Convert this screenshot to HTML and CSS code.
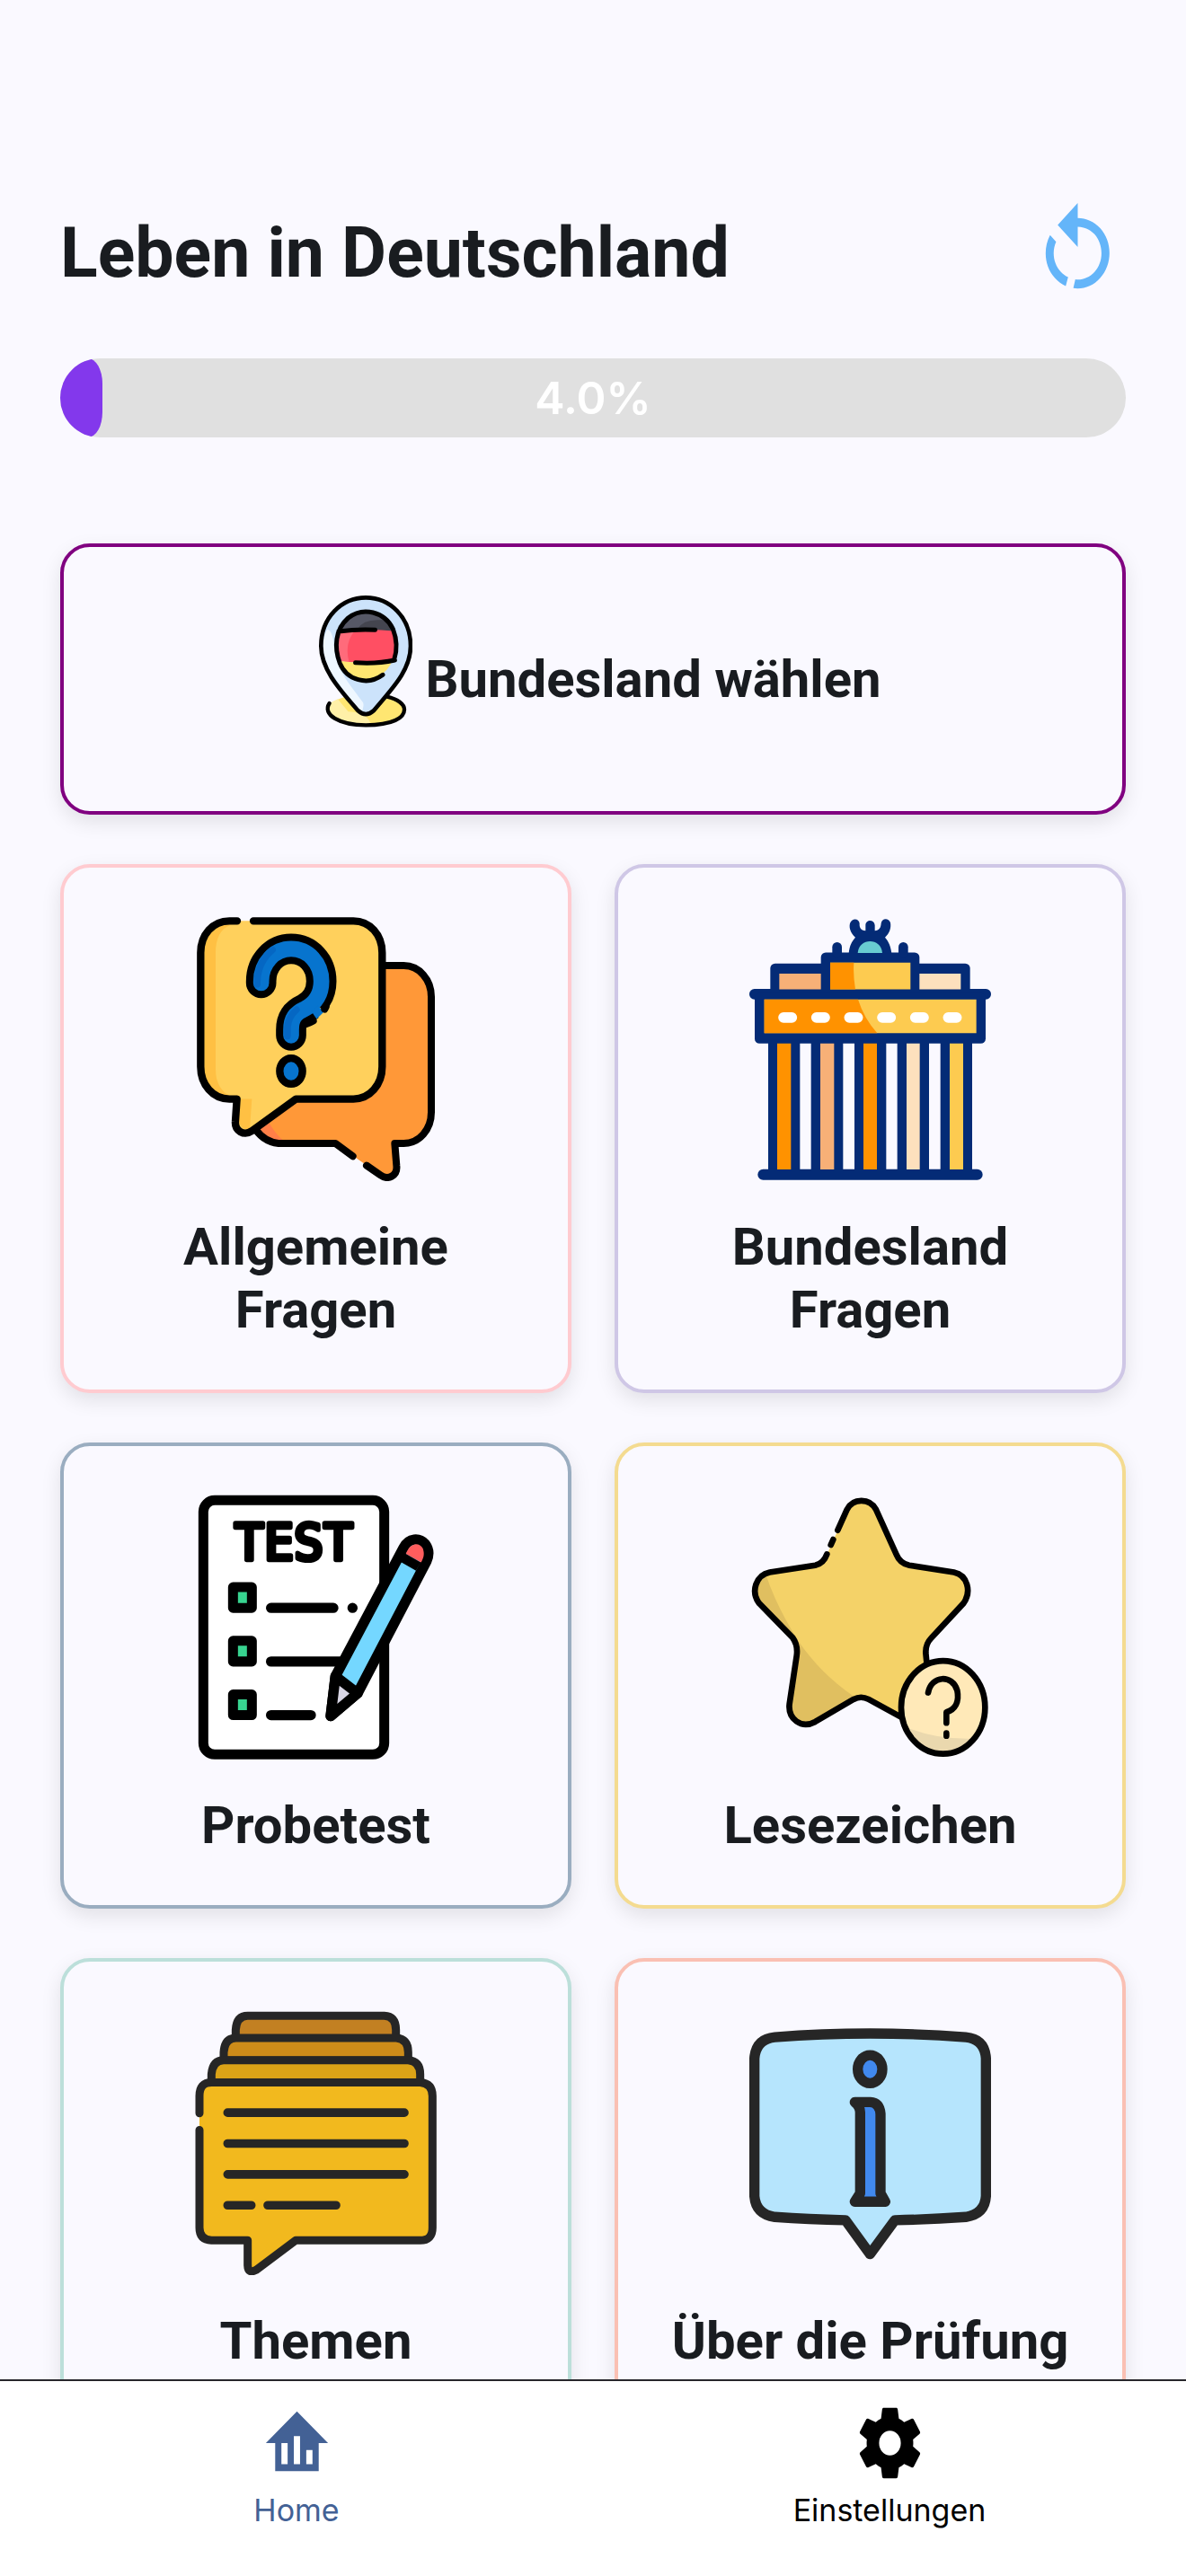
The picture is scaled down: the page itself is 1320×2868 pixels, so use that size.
FILE: index.html
```html
<!DOCTYPE html>
<html lang="de">
<head>
    <meta charset="utf-8">
    <meta name="viewport" content="width=device-width, initial-scale=1">
    <title>Leben in Deutschland</title>
    <link rel="stylesheet" href="styles.css">
</head>
<body>
    <main class="content">
        <header class="header">
            <h1>Leben in Deutschland</h1>
            <button type="button" class="restart" aria-label="Neu starten">
                <svg viewBox="0 0 24 24" preserveAspectRatio="none"><path d="M12,4C14.1,4 16.1,4.8 17.6,6.3C20.7,9.4 20.7,14.5 17.6,17.6C15.8,19.5 13.3,20.2 10.9,19.9L11.4,17.9C13.1,18.1 14.9,17.5 16.2,16.2C18.5,13.9 18.5,10.1 16.2,7.7C15.1,6.6 13.5,6 12,6V10.6L7,5.6L12,0.6V4M6.3,17.6C3.7,15 3.3,11 5.1,7.9L6.6,9.4C5.5,11.6 5.9,14.4 7.8,16.2C8.3,16.7 8.9,17.1 9.6,17.4L9,19.4C8,19 7.1,18.4 6.3,17.6Z"/></svg>
            </button>
        </header>

        <div class="progress" role="progressbar" aria-label="Fortschritt" aria-valuemin="0" aria-valuemax="100" aria-valuenow="4">
            <div class="progress_fill" style="width: 4%"></div>
            <span class="progress_text">4.0%</span>
        </div>

        <a href="#bundesland" class="card select">
            <svg class="pin" viewBox="42 42 313 441" preserveAspectRatio="none" aria-hidden="true">
                <ellipse cx="199" cy="423" rx="128" ry="50" fill="#ffe671"/>
                <path d="M77 402C60 440 120 475 215 472C210 445 175 430 140 430Q115 400 105 388Z" fill="#fff0a8"/>
                <path d="M77 402C52 440 110 475 199 475C290 475 328 450 328 423C328 405 305 388 270 380" fill="none" stroke="#000" stroke-width="13" stroke-linecap="round"/>
                <path d="M199 49C118 49 49 115 49 211C49 295 125 370 173 427Q199 450 225 427C280 360 349 295 349 211C349 115 280 49 199 49Z" fill="#cce3fb"/>
                <path d="M70 155C85 158 92 190 92 212C95 285 150 345 190 400Q194 415 184 432Q172 432 160 410L80 295C50 240 50 190 70 155Z" fill="#eef7ff"/>
                <clipPath id="flag"><ellipse cx="199" cy="210" rx="99" ry="114"/></clipPath>
                <g clip-path="url(#flag)">
                    <path d="M90 90H310V165Q200 150 90 162Z" fill="#565866"/>
                    <path d="M170 155Q190 122 245 124L310 120V170Z" fill="#44454f"/>
                    <path d="M90 162Q200 150 310 162V258Q200 274 90 258Z" fill="#ff4f63"/>
                    <path d="M90 162Q130 156 165 156Q125 200 143 264Q110 262 90 258Z" fill="#ff6b7b"/>
                    <path d="M90 258Q200 274 310 258V330H90Z" fill="#ffe671"/>
                </g>
                <path d="M256 307C205 345 135 325 112 268C92 215 96 155 140 117C190 78 262 96 290 154Q310 206 294 256M108 162Q170 154 230 157M164 266Q235 271 296 258" fill="none" stroke="#000" stroke-width="15" stroke-linecap="round"/>
                <path d="M199 49C118 49 49 115 49 211C49 295 125 370 173 427Q199 450 225 427C280 360 349 295 349 211C349 115 280 49 199 49Z" fill="none" stroke="#000" stroke-width="14"/>
            </svg>
            <span class="card_text">Bundesland wählen</span>
        </a>

        <div class="cards">
            <a href="#allgemein" class="card card_pink">
                <svg class="icon" viewBox="51 58 807 884" preserveAspectRatio="none" aria-hidden="true">
                    <path d="M676 223H748C800 223 840 270 840 327V712C840 770 800 816 748 816H718L724 890C728 925 695 940 670 922L520 816H330C270 816 240 770 230 740L600 600Z" fill="#ff9838"/>
                    <path d="M260 770L297 745Q320 785 345 806Q295 810 260 770Z" fill="#ff7f48"/>
                    <path d="M676 223H748C800 223 840 270 840 327V712C840 770 800 816 748 816H718L724 890C728 925 695 940 670 922L624 890M578 859L520 816H330Q285 812 255 772" fill="none" stroke="#000" stroke-width="24" stroke-linecap="round" stroke-linejoin="round"/>
                    <path d="M166 74H580C635 74 676 120 676 180V560C676 620 635 668 580 668H388L240 775C215 792 183 775 186 742L191 668H166C110 668 70 620 70 560V180C70 120 110 74 166 74Z" fill="#ffd05c"/>
                    <path d="M180 86C140 90 120 130 120 178V570C120 620 145 650 172 659C115 662 82 620 82 562V180C82 130 115 86 166 86Z" fill="#ffc043"/>
                    <path d="M202 668H241L234 768Q205 775 198 742Z" fill="#ffc043"/>
                    <path d="M246 74H580C635 74 676 120 676 180V560C676 620 635 668 580 668H388L240 775C215 792 183 775 186 742L191 668H166C110 668 70 620 70 560V180C70 120 110 74 166 74H192" fill="none" stroke="#000" stroke-width="25" stroke-linecap="round" stroke-linejoin="round"/>
                    <path d="M272 281V275C272 215 316 167 372 167C430 167 473 215 473 275C473 320 450 350 418 367C385 382 372 400 372 437V456" fill="none" stroke="#000" stroke-width="101" stroke-linecap="round"/>
                    <path d="M272 281V275C272 215 316 167 372 167C430 167 473 215 473 275C473 320 450 350 418 367C385 382 372 400 372 437V456" fill="none" stroke="#0774ce" stroke-width="53" stroke-linecap="round"/>
                    <path d="M259 285V275Q262 210 310 170M360 458V430Q362 395 390 370" fill="none" stroke="#0567c3" stroke-width="22" stroke-linecap="round"/>
                    <path d="M447 379L475 408L492 386L468 362Z" fill="#ffd05c"/>
                    <path d="M440 376L457 401L481 378L462 357Z" fill="#0774ce"/>
                    <path d="M484 368L488 361M446 407Q432 415 424 417" fill="none" stroke="#000" stroke-width="24" stroke-linecap="round"/>
                    <ellipse cx="372" cy="575" rx="38" ry="43" fill="#0774ce" stroke="#000" stroke-width="25"/>
                </svg>
                <span class="card_text">Allgemeine Fragen</span>
            </a>

            <a href="#land" class="card card_lilac">
                <svg class="icon" viewBox="42 58 807 884" preserveAspectRatio="none" aria-hidden="true">
                    <g fill="#042b76">
                        <rect x="112" y="216" width="667" height="110" rx="16"/>
                        <rect x="281" y="179" width="329" height="130" rx="16"/>
                        <path d="M374 182C377 155 384 143 396 129C377 112 374 92 379 80C386 62 409 66 410 82C409 96 414 105 430 107V88C431 68 459 68 461 88V107C476 105 481 97 482 82C484 64 507 62 513 80C516 98 510 115 495 129C507 143 514 158 517 182Z"/>
                        <rect x="319" y="145" width="32" height="50" rx="16"/>
                        <rect x="540" y="145" width="32" height="50" rx="16"/>
                        <rect x="42" y="301" width="807" height="35" rx="17"/>
                        <rect x="60" y="315" width="771" height="168" rx="16"/>
                        <path d="M105 470H211V915H105ZM248 470H355V915H248ZM393 470H499V915H393ZM536 470H642V915H536ZM680 470H786V915H680Z"/>
                        <rect x="70" y="902" width="751" height="36" rx="18"/>
                    </g>
                    <path d="M404 181C408 129 482 129 486 181Z" fill="#68ccd1"/>
                    <path d="M142 250H281V302H142ZM279 483H325V903H279Z" fill="#f7b077"/>
                    <path d="M610 250H748V302H610ZM567 483H611V903H567Z" fill="#fde0bd"/>
                    <path d="M312 213H580V302H312ZM92 336H800V448H92ZM711 483H756V903H711Z" fill="#fdcb50"/>
                    <path d="M312 213H391Q388 255 396 302H312ZM92 336H405Q425 400 469 448H92ZM135 483H181V903H135ZM423 483H468V903H423Z" fill="#ff9200"/>
                    <path d="M156 396H184M266 396H294M376 396H404M486 396H514M596 396H624M706 396H734" stroke="#fff" stroke-width="35" stroke-linecap="round"/>
                </svg>
                <span class="card_text">Bundesland Fragen</span>
            </a>

            <a href="#probetest" class="card card_blue">
                <svg class="icon" viewBox="51 72 807 884" preserveAspectRatio="none" aria-hidden="true">
                    <rect x="79" y="91" width="604" height="848" rx="38" fill="#fff" stroke="#000" stroke-width="33"/>
                    <text class="icon_text" x="381" y="287">TEST</text>
                    <g fill="#38d490" stroke="#000" stroke-width="33" stroke-linejoin="round">
                        <rect x="178" y="381" width="63" height="69"/>
                        <rect x="178" y="560" width="63" height="69"/>
                        <rect x="178" y="739" width="63" height="69"/>
                    </g>
                    <path d="M305 450H513M577 450H577.1M305 629H540M305 808H438" fill="none" stroke="#000" stroke-width="34" stroke-linecap="round"/>
                    <path d="M504 811L520 678L747 250C765 215 800 215 820 237C833 255 833 275 824 295L594 735Z" fill="#74d7ff" stroke="#000" stroke-width="34" stroke-linejoin="round"/>
                    <path d="M755 270C770 230 800 230 812 252C818 270 815 282 806 298Z" fill="#ff5d5d"/>
                    <path d="M746 283L797 312" stroke="#000" stroke-width="32"/>
                    <path d="M504 811L520 678L594 735Z" fill="#d9d6e5" stroke="#000" stroke-width="34" stroke-linejoin="round"/>
                </svg>
                <span class="card_text">Probetest</span>
            </a>

            <a href="#lesezeichen" class="card card_yellow">
                <svg class="icon" viewBox="42 72 807 884" preserveAspectRatio="none" aria-hidden="true">
                    <path d="M368 122C388 83 444 83 465 122L533 272Q545 302 576 308L725 331C770 340 785 395 757 435L650 550Q630 570 631 600L660 770C655 820 620 850 570 830L440 755Q415 742 390 755L262 830C215 855 170 820 176 770L200 610Q205 575 187 550L75 435C45 395 65 340 110 331L262 308Q290 302 303 268Z" fill="#f4d268"/>
                    <path d="M97 338Q130 440 205 560Q280 670 390 745L262 830C215 850 172 820 178 770L202 610Q207 575 187 550L75 435C50 395 65 355 97 338Z" fill="#e0bf60"/>
                    <path d="M337 191L368 122C388 83 444 83 465 122L533 272Q545 302 576 308L725 331C770 340 785 395 757 435L650 550Q630 570 631 600L635 640M555 818L440 755Q415 742 390 755L262 830C215 855 170 820 176 770L200 610Q205 575 187 550L75 435C45 395 65 340 110 331L262 308Q290 302 301 271M322 222L314 240" fill="none" stroke="#000" stroke-width="20" stroke-linecap="round"/>
                    <ellipse cx="689" cy="782" rx="140" ry="155" fill="#ffe9b8"/>
                    <path d="M565 847Q660 890 790 886Q750 937 689 937Q610 937 565 847Z" fill="#ead8ae"/>
                    <ellipse cx="689" cy="782" rx="140" ry="155" fill="none" stroke="#000" stroke-width="20"/>
                    <path d="M639 733C650 674 720 672 736 725C744 765 728 790 700 798V834M700 868V877" fill="none" stroke="#000" stroke-width="20" stroke-linecap="round" stroke-linejoin="round"/>
                </svg>
                <span class="card_text">Lesezeichen</span>
            </a>

            <a href="#themen" class="card card_mint">
                <svg class="icon" viewBox="51 54 807 884" preserveAspectRatio="none" aria-hidden="true">
                    <g stroke="#262626" stroke-width="27" stroke-linejoin="round" stroke-linecap="round">
                        <path d="M187 150V120Q190 73 227 73H683Q722 75 722 120V150Z" fill="#c28022"/>
                        <path d="M147 222V195Q150 147 188 147H723Q763 150 763 195V222Z" fill="#cd8c19"/>
                        <path d="M106 296V268Q110 221 147 221H763Q803 224 803 268V296Z" fill="#dba317"/>
                        <path d="M66 396V340Q66 295 106 295H803Q844 298 844 340V780Q844 822 803 822H387L255 921Q228 935 227 905V822H106Q66 820 66 780V455Z" fill="#f2b91e" stroke="none"/>
                        <path d="M66 398V340Q66 295 106 295H803Q844 298 844 340V780Q844 822 803 822H387L255 921Q228 935 227 905V822H106Q66 820 66 780V454" fill="none"/>
                        <path d="M160 396H750M160 499H750M160 602H750M160 705H239M294 705H522" fill="none" stroke-width="29"/>
                    </g>
                </svg>
                <span class="card_text">Themen</span>
            </a>

            <a href="#pruefung" class="card card_coral">
                <svg class="icon" viewBox="42 54 807 884" preserveAspectRatio="none" aria-hidden="true">
                    <g stroke="#262626" stroke-width="34" stroke-linejoin="round">
                        <path d="M127 144Q445 120 765 144Q828 150 832 215V675Q828 735 765 744Q650 752 528 755L445 868L363 755Q240 752 127 744Q64 735 59 675V215Q64 150 127 144Z" fill="#b6e5fd"/>
                        <ellipse cx="445" cy="251" rx="41" ry="47" fill="#4189ee"/>
                        <path d="M394 361H446Q477 363 480 400V665L496 693H394L412 665V395Q412 375 394 361Z" fill="#4189ee"/>
                    </g>
                </svg>
                <span class="card_text">Über die Prüfung</span>
            </a>
        </div>
    </main>

    <nav class="tabs">
        <a href="#home" class="tab active" aria-current="page">
            <svg viewBox="0 0 24 24" preserveAspectRatio="none" aria-hidden="true"><path d="M12,3L2,12H5V20H19V12H22L12,3M9,18H7V12H9V18M13,18H11V10H13V18M17,18H15V14H17V18Z" fill-rule="evenodd"/></svg>
            <span>Home</span>
        </a>
        <a href="#einstellungen" class="tab">
            <svg viewBox="0 0 24 24" preserveAspectRatio="none" aria-hidden="true"><path d="M12,15.5A3.5,3.5 0 0,1 8.5,12A3.5,3.5 0 0,1 12,8.5A3.5,3.5 0 0,1 15.5,12A3.5,3.5 0 0,1 12,15.5M19.43,12.97C19.47,12.65 19.5,12.33 19.5,12C19.5,11.67 19.47,11.34 19.43,11L21.54,9.37C21.73,9.22 21.78,8.95 21.66,8.73L19.66,5.27C19.54,5.05 19.27,4.96 19.05,5.05L16.56,6.05C16.04,5.66 15.5,5.32 14.87,5.07L14.5,2.42C14.46,2.18 14.25,2 14,2H10C9.75,2 9.54,2.18 9.5,2.42L9.13,5.07C8.5,5.32 7.96,5.66 7.44,6.05L4.95,5.05C4.73,4.96 4.46,5.05 4.34,5.27L2.34,8.73C2.21,8.95 2.27,9.22 2.46,9.37L4.57,11C4.53,11.34 4.5,11.67 4.5,12C4.5,12.33 4.53,12.65 4.57,12.97L2.46,14.63C2.27,14.78 2.21,15.05 2.34,15.27L4.34,18.73C4.46,18.95 4.73,19.03 4.95,18.95L7.44,17.94C7.96,18.34 8.5,18.68 9.13,18.93L9.5,21.58C9.54,21.82 9.75,22 10,22H14C14.25,22 14.46,21.82 14.5,21.58L14.87,18.93C15.5,18.67 16.04,18.34 16.56,17.94L19.05,18.95C19.27,19.03 19.54,18.95 19.66,18.73L21.66,15.27C21.78,15.05 21.73,14.78 21.54,14.63L19.43,12.97Z"/></svg>
            <span>Einstellungen</span>
        </a>
    </nav>
</body>
</html>
```

FILE: styles.css
```css
* { box-sizing: border-box; }
body { margin: 0; height: 100vh; display: flex; flex-direction: column; background: #faf9ff; color: #191c20; font-family: Roboto, "Liberation Sans", sans-serif; }
a { color: inherit; text-decoration: none; }
svg { display: block; flex: none; }

.content { flex: 1; min-height: 0; overflow-y: auto; scrollbar-width: none; padding: 223px 67px 55px; }

.header { display: flex; align-items: center; justify-content: space-between; }
.header h1 { margin: 0; font-size: 77px; line-height: 118px; font-weight: 700; }
.restart { border: 0; padding: 0; background: none; cursor: pointer; }
.restart svg { width: 107px; height: 118px; fill: #64b5f9; }

.progress { position: relative; display: flex; align-items: center; justify-content: center; height: 88px; margin: 58px 0 118px; border-radius: 44px; background: #e0e0e0; overflow: hidden; }
.progress_fill { position: absolute; top: 0; left: 0; height: 100%; border-radius: 0 16px 16px 0 / 0 28px 28px 0; background: #8338ec; }
.progress_text { position: relative; color: #fff; font-family: Inter, sans-serif; font-size: 50px; font-weight: 600; }

.card { display: flex; flex-direction: column; align-items: center; padding: 54px 50px; border: 4px solid #800080; border-radius: 33px; background: #faf9ff; box-shadow: 0 8px 22px rgba(0, 0, 0, 0.1); }
.card_text { font-size: 58px; line-height: 70px; font-weight: 700; text-align: center; }
.select { flex-direction: row; align-items: center; justify-content: center; gap: 14px; height: 302px; margin-bottom: 55px; }
.pin { width: 104px; height: 147px; margin-left: 16px; align-self: flex-start; }

.cards { display: grid; grid-template-columns: 1fr 1fr; gap: 55px 48px; }
.icon { width: 269px; height: 295px; margin-bottom: 38px; }
.icon_text { font-family: "DejaVu Sans Mono", monospace; font-size: 165px; text-anchor: middle; stroke: #000; stroke-width: 16px; stroke-linejoin: round; }
.card_pink { border-color: #ffcbd0; }
.card_lilac { border-color: #cfc7e6; }
.card_blue { border-color: #9aadc0; }
.card_yellow { border-color: #f4db90; }
.card_mint { border-color: #bcdfda; }
.card_coral { border-color: #fac0b3; }

.tabs { display: flex; height: 219px; border-top: 2px solid #27262b; background: #fff; }
.tab { flex: 1; display: flex; flex-direction: column; align-items: center; padding-top: 22px; color: #000; font-family: Inter, sans-serif; font-size: 34px; line-height: 44px; }
.tab svg { width: 83px; height: 94px; margin-bottom: 6px; fill: currentColor; }
.tab.active { color: #436195; }
```
